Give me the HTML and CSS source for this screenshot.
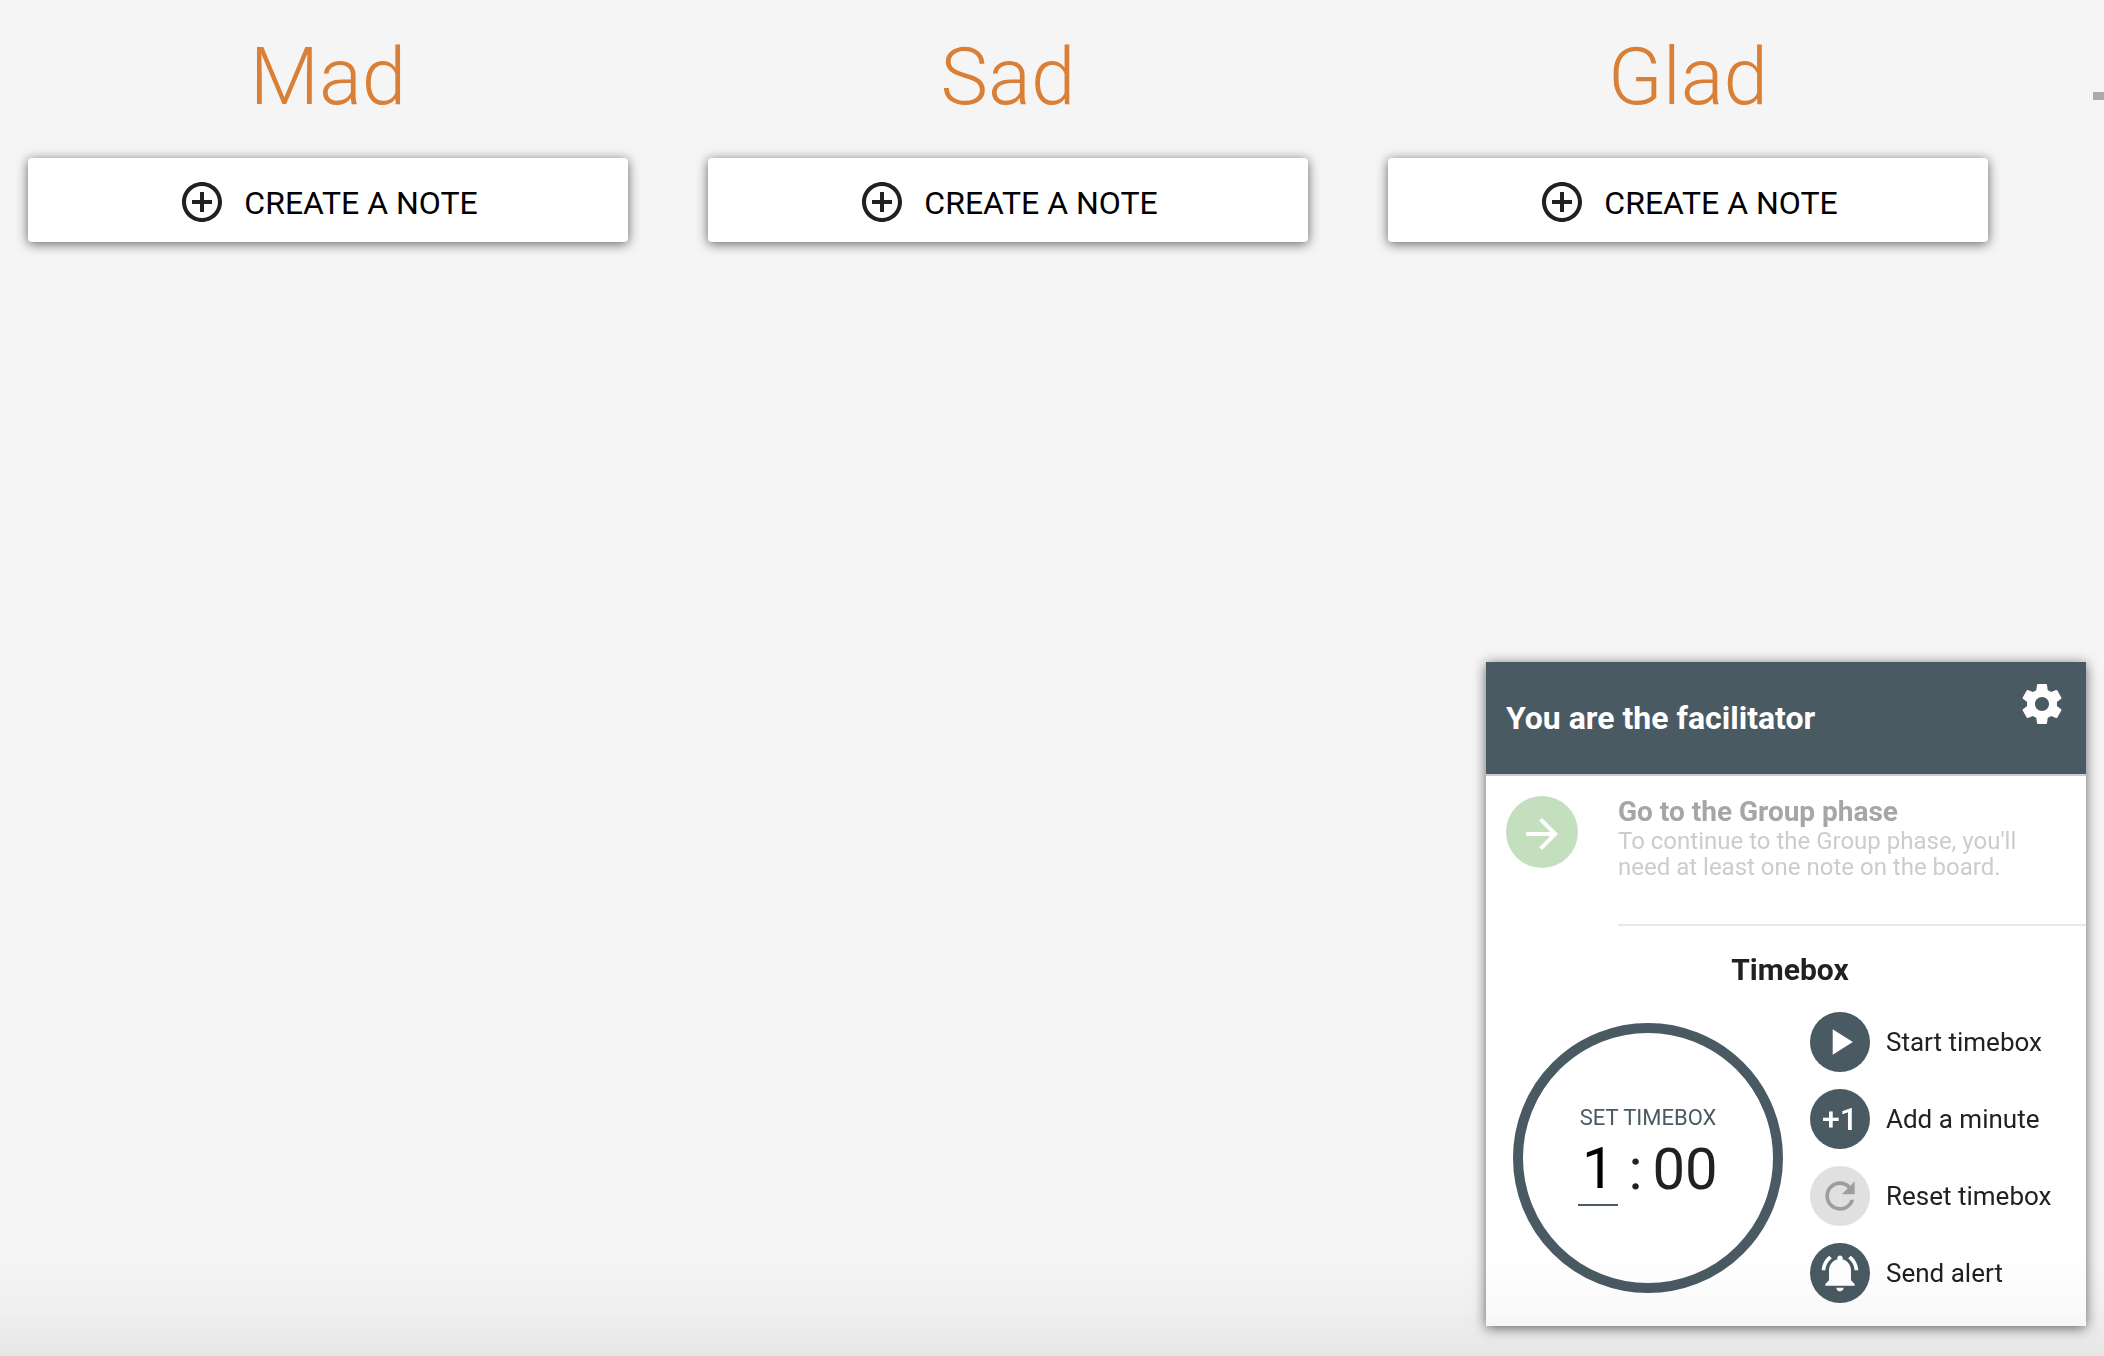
FILE: index.html
```html
<!DOCTYPE html>
<html lang="en">
<head>
    <meta charset="UTF-8">
    <meta name="viewport" content="width=device-width, initial-scale=1.0">
    <title>Retro board</title>
    <link rel="stylesheet" href="styles.css">
</head>
<body>
    <main class="board">
        <section class="column">
            <h2>Mad</h2>
            <button type="button" class="create-note">
                <svg class="icon" viewBox="0 0 24 24"><path d="M13 7h-2v4H7v2h4v4h2v-4h4v-2h-4V7zm-1-5C6.48 2 2 6.48 2 12s4.48 10 10 10 10-4.48 10-10S17.52 2 12 2zm0 18c-4.41 0-8-3.59-8-8s3.59-8 8-8 8 3.59 8 8-3.59 8-8 8z"/></svg>
                <span>CREATE A NOTE</span>
            </button>
        </section>
        <section class="column">
            <h2>Sad</h2>
            <button type="button" class="create-note">
                <svg class="icon" viewBox="0 0 24 24"><path d="M13 7h-2v4H7v2h4v4h2v-4h4v-2h-4V7zm-1-5C6.48 2 2 6.48 2 12s4.48 10 10 10 10-4.48 10-10S17.52 2 12 2zm0 18c-4.41 0-8-3.59-8-8s3.59-8 8-8 8 3.59 8 8-3.59 8-8 8z"/></svg>
                <span>CREATE A NOTE</span>
            </button>
        </section>
        <section class="column">
            <h2>Glad</h2>
            <button type="button" class="create-note">
                <svg class="icon" viewBox="0 0 24 24"><path d="M13 7h-2v4H7v2h4v4h2v-4h4v-2h-4V7zm-1-5C6.48 2 2 6.48 2 12s4.48 10 10 10 10-4.48 10-10S17.52 2 12 2zm0 18c-4.41 0-8-3.59-8-8s3.59-8 8-8 8 3.59 8 8-3.59 8-8 8z"/></svg>
                <span>CREATE A NOTE</span>
            </button>
        </section>
        <button type="button" class="add-column" aria-label="Add a column">
            <svg viewBox="0 0 24 24"><path d="M19 13h-6v6h-2v-6H5v-2h6V5h2v6h6v2z"/></svg>
        </button>
    </main>

    <!-- facilitator panel, floats over the board -->
    <aside class="panel">
        <header class="panel-header">
            <h3>You are the facilitator</h3>
            <button type="button" class="settings" aria-label="Settings">
                <svg class="icon" viewBox="0 0 24 24"><path d="M19.43 12.98c.04-.32.07-.64.07-.98s-.03-.66-.07-.98l2.11-1.65c.19-.15.24-.42.12-.64l-2-3.46c-.12-.22-.39-.3-.61-.22l-2.49 1c-.52-.4-1.08-.73-1.69-.98l-.38-2.65C14.46 2.18 14.25 2 14 2h-4c-.25 0-.46.18-.49.42l-.38 2.65c-.61.25-1.17.59-1.69.98l-2.49-1c-.23-.09-.49 0-.61.22l-2 3.46c-.13.22-.07.49.12.64l2.11 1.65c-.04.32-.07.65-.07.98s.03.66.07.98l-2.11 1.65c-.19.15-.24.42-.12.64l2 3.46c.12.22.39.3.61.22l2.49-1c.52.4 1.08.73 1.69.98l.38 2.65c.03.24.24.42.49.42h4c.25 0 .46-.18.49-.42l.38-2.65c.61-.25 1.17-.59 1.69-.98l2.49 1c.23.09.49 0 .61-.22l2-3.46c.12-.22.07-.49-.12-.64l-2.11-1.65zM12 15.5c-1.93 0-3.5-1.57-3.5-3.5s1.57-3.5 3.5-3.5 3.5 1.57 3.5 3.5-1.57 3.5-3.5 3.5z"/></svg>
            </button>
        </header>

        <div class="phase">
            <button type="button" class="phase-button" aria-labelledby="phase-title" disabled>
                <svg class="icon" viewBox="0 0 24 24"><path d="M12 4l-1.41 1.41L16.17 11H4v2h12.17l-5.58 5.59L12 20l8-8z"/></svg>
            </button>
            <div class="phase-text">
                <h4 id="phase-title">Go to the Group phase</h4>
                <p>To continue to the Group phase, you'll need at least one note on the board.</p>
            </div>
        </div>

        <h4 class="timebox-title">Timebox</h4>
        <div class="timebox">
            <div class="clock">
                <label for="minutes">SET TIMEBOX</label>
                <div class="time">
                    <input id="minutes" type="text" value="1">
                    <span class="colon">:</span>
                    <span>00</span>
                </div>
            </div>
            <div class="actions">
                <button type="button" class="action">
                    <span class="round"><svg viewBox="0 0 24 24"><path d="M8 5v14l11-7z"/></svg></span>
                    Start timebox
                </button>
                <button type="button" class="action" aria-label="Add a minute">
                    <span class="round">+1</span>
                    Add a minute
                </button>
                <button type="button" class="action" disabled>
                    <span class="round"><svg viewBox="0 0 24 24"><path d="M17.65 6.35C16.2 4.9 14.21 4 12 4c-4.42 0-7.99 3.58-7.99 8s3.57 8 7.99 8c3.73 0 6.84-2.55 7.73-6h-2.08c-.82 2.33-3.04 4-5.65 4-3.31 0-6-2.69-6-6s2.69-6 6-6c1.66 0 3.14.69 4.22 1.78L13 11h7V4l-2.35 2.35z"/></svg></span>
                    Reset timebox
                </button>
                <button type="button" class="action">
                    <span class="round"><svg viewBox="0 0 24 24"><path d="M7.58 4.08L6.15 2.65C3.75 4.48 2.17 7.3 2.03 10.5h2c.15-2.65 1.51-4.97 3.55-6.42zm12.39 6.42h2c-.15-3.2-1.73-6.02-4.12-7.85l-1.42 1.43c2.02 1.45 3.39 3.77 3.54 6.42zM18 11c0-3.07-1.64-5.64-4.5-6.32V4c0-.83-.67-1.5-1.5-1.5s-1.5.67-1.5 1.5v.68C7.63 5.36 6 7.92 6 11v5l-2 2v1h16v-1l-2-2v-5zm-6 11c.14 0 .27-.01.4-.04.65-.14 1.18-.58 1.44-1.18.1-.24.15-.5.15-.78h-4c.01 1.1.9 2 2.01 2z"/></svg></span>
                    Send alert
                </button>
            </div>
        </div>
    </aside>
    <div class="fade"></div>
</body>
</html>
```

FILE: styles.css
```css
* {
    box-sizing: border-box;
    margin: 0;
    padding: 0;
}

body {
    min-height: 100vh;
    overflow: hidden;
    background: #f5f5f5;
    color: #212121;
    font-family: Roboto, "Liberation Sans", sans-serif;
}

button,
input {
    border: none;
    background: none;
    color: inherit;
    font: inherit;
}

svg {
    display: block;
    flex-shrink: 0;
    fill: currentColor;
}

.icon {
    width: 48px;
    height: 48px;
}

/* board */
.board {
    display: flex;
    gap: 80px;
    align-items: flex-start;
    padding: 28px;
}

.column {
    flex: 0 0 600px;
}

.column h2 {
    margin-bottom: 32px;
    color: #d97f36;
    font-size: 80px;
    font-weight: 300;
    line-height: 98px;
    text-align: center;
}

.create-note {
    display: flex;
    align-items: center;
    justify-content: center;
    gap: 18px;
    width: 100%;
    padding: 20px 16px 16px;
    border-radius: 4px;
    background: #fff;
    box-shadow: 0 2px 12px rgba(0, 0, 0, 0.6);
    font-size: 32px;
}

.create-note span {
    padding-top: 2px;
    color: #000;
}

.add-column {
    padding: 20px 5px;
    color: #aaa;
}

.add-column svg {
    width: 96px;
    height: 96px;
}

/* facilitator panel */
.panel {
    position: fixed;
    right: 18px;
    bottom: 30px;
    width: 600px;
    background: #fff;
    box-shadow: 0 2px 12px rgba(0, 0, 0, 0.6);
}

.panel-header {
    display: flex;
    justify-content: space-between;
    padding: 18px 20px;
    border-bottom: 2px solid #ccc;
    background: #4a5a62;
    color: #fff;
}

.panel-header h3 {
    font-size: 32px;
    line-height: 76px;
}

.settings {
    align-self: flex-start;
}

.phase {
    display: flex;
    gap: 40px;
    padding: 20px 0 0 20px;
}

.phase-button {
    display: flex;
    flex: 0 0 72px;
    align-items: center;
    justify-content: center;
    height: 72px;
    padding-top: 4px;
    border-radius: 50%;
    background: #c3dfbe;
    color: #fff;
}

.phase-text {
    flex: 1;
    padding: 0 60px 44px 0;
    border-bottom: 2px solid #e8e8e8;
    color: #ccc;
    font-size: 24px;
    line-height: 26px;
}

.phase-text h4 {
    color: #a6a6a6;
    font-size: 28px;
    line-height: 32px;
}

.timebox-title {
    padding: 24px 0 0 8px;
    font-size: 30px;
    line-height: 40px;
    text-align: center;
}

.timebox {
    display: flex;
    align-items: center;
    gap: 27px;
    padding: 22px 27px 23px;
}

.clock {
    display: flex;
    flex: 0 0 270px;
    flex-direction: column;
    align-items: center;
    justify-content: center;
    height: 270px;
    padding-bottom: 6px;
    border: 10px solid #4a5a62;
    border-radius: 50%;
}

.clock label {
    color: #4a5a62;
    font-size: 22px;
    line-height: 28px;
}

.time {
    display: flex;
    align-items: center;
    font-size: 58px;
    line-height: 72px;
}

.time input {
    width: 40px;
    height: 74px;
    border-bottom: 2px solid #4a5a62;
    color: #000;
    text-align: center;
}

.colon {
    padding: 0 10px;
}

.actions {
    display: grid;
    gap: 17px;
}

.action {
    display: flex;
    align-items: center;
    gap: 16px;
    font-size: 26px;
    white-space: nowrap;
}

.round {
    display: flex;
    flex-shrink: 0;
    align-items: center;
    justify-content: center;
    width: 60px;
    height: 60px;
    border-radius: 50%;
    background: #4a5a62;
    color: #fff;
    font-size: 32px;
    font-weight: 500;
}

.round svg {
    width: 44px;
    height: 44px;
}

.action:disabled .round {
    background: #e0e0e0;
    color: #9e9e9e;
}

/* soft shade along the bottom of the window */
.fade {
    position: fixed;
    right: 0;
    bottom: 0;
    left: 0;
    height: 100px;
    background: linear-gradient(transparent, rgba(0, 0, 0, 0.02) 50%, rgba(0, 0, 0, 0.06));
    pointer-events: none;
}
```
